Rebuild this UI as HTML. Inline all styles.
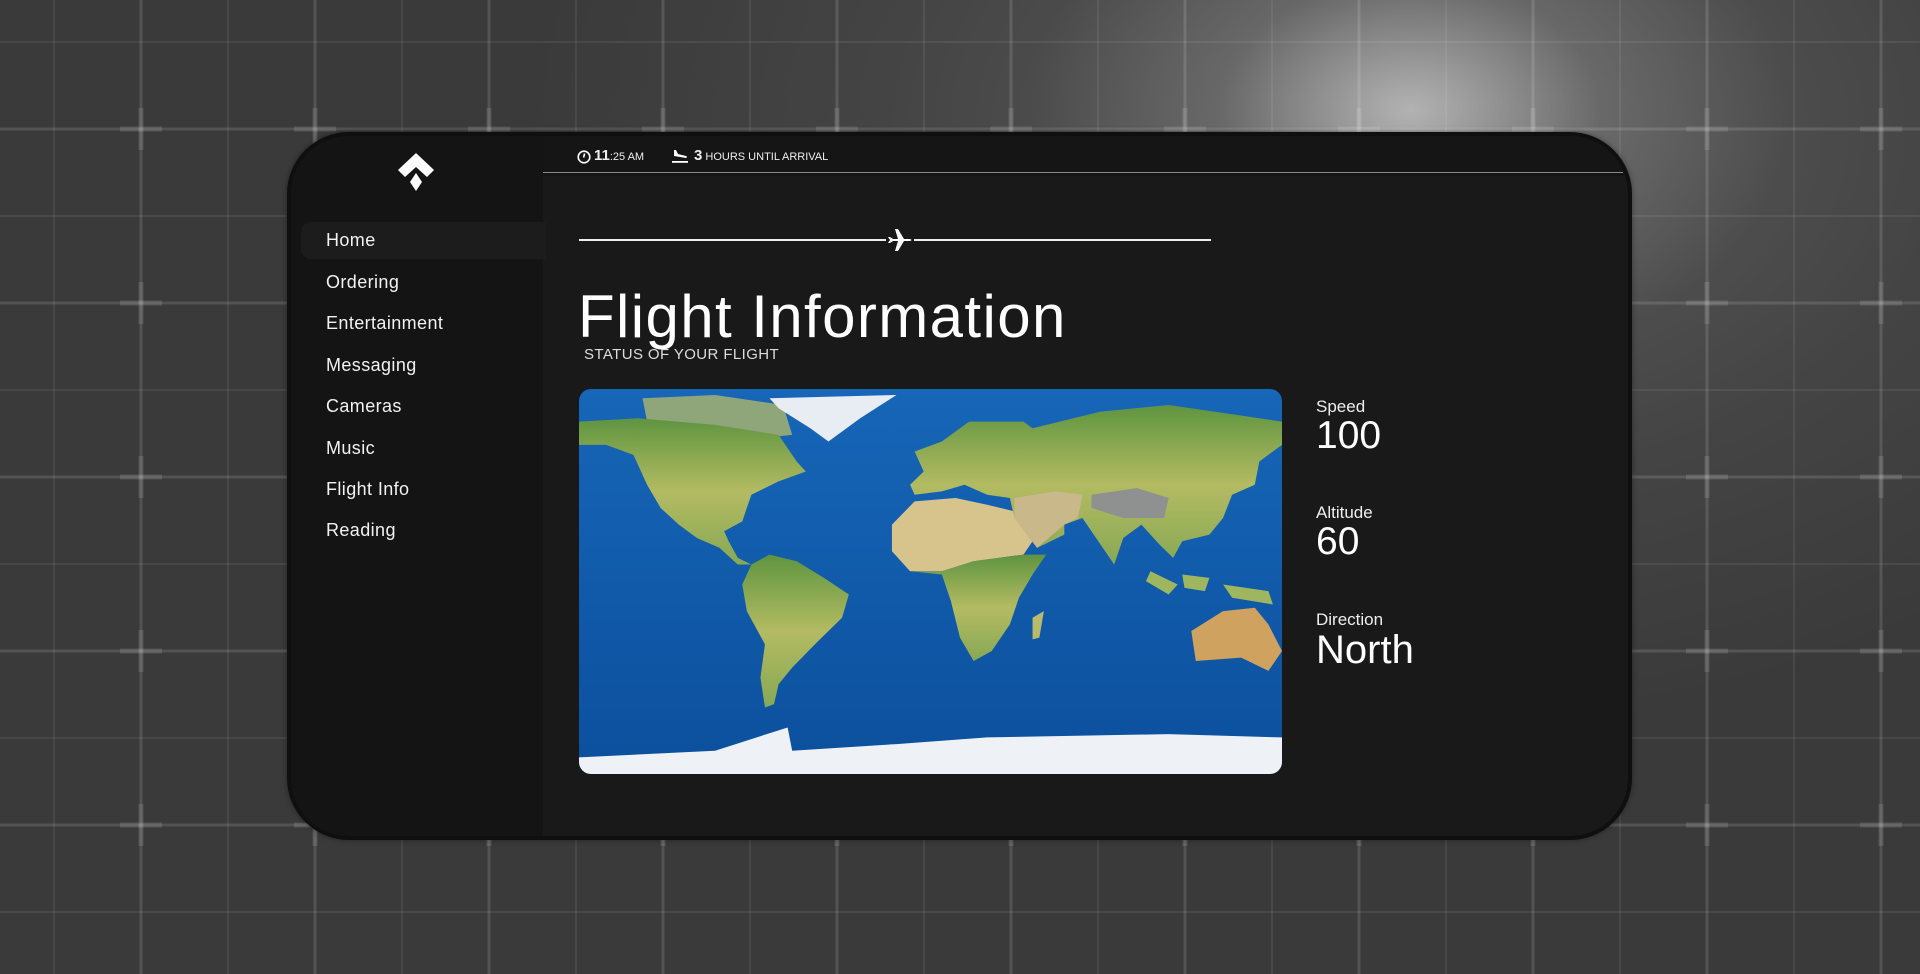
<!DOCTYPE html>
<html><head><meta charset="utf-8">
<style>
*{margin:0;padding:0;box-sizing:border-box}
html,body{width:1920px;height:974px;overflow:hidden}
body{position:relative;font-family:"Liberation Sans","DejaVu Sans",sans-serif;color:#fff;
background:
radial-gradient(ellipse 380px 260px at 1410px 110px, rgba(215,215,215,0.7), rgba(150,150,150,0.3) 50%, rgba(0,0,0,0) 100%),
radial-gradient(ellipse 900px 600px at 1420px 130px, #5e5e5e, #444 60%, #3a3a3a 100%);
}
.grid{position:absolute;inset:0}
.panel{position:absolute;left:287px;top:132px;width:1345px;height:708px;border-radius:62px;background:#191919;border:4px solid #0f0f0f;overflow:hidden;box-shadow:0 0 6px rgba(0,0,0,0.4)}
.side{position:absolute;left:0;top:0;width:252px;height:100%;background:#141414}
.head{position:absolute;left:252px;top:0;right:0;height:40px;background:#151515}
.hline{position:absolute;left:252px;top:36px;width:1080px;height:1px;background:#8a8a8a}
.nav{position:absolute;left:35px;font-size:18px;color:#f2f2f2;letter-spacing:0.4px}
.hl{position:absolute;left:10px;top:86px;width:245px;height:37px;background:#1c1c1c;border-radius:10px 0 0 10px}
.stat{position:absolute;left:1025px}
.lbl{font-size:17px;color:#eee}
.val{font-size:39px;line-height:38px}
</style></head><body>
<svg class="grid" width="1920" height="974">
<g stroke="rgba(255,255,255,0.07)" stroke-width="2">
<line x1="54" y1="0" x2="54" y2="974"/><line x1="228" y1="0" x2="228" y2="974"/><line x1="402" y1="0" x2="402" y2="974"/><line x1="576" y1="0" x2="576" y2="974"/><line x1="750" y1="0" x2="750" y2="974"/><line x1="924" y1="0" x2="924" y2="974"/><line x1="1098" y1="0" x2="1098" y2="974"/><line x1="1272" y1="0" x2="1272" y2="974"/><line x1="1446" y1="0" x2="1446" y2="974"/><line x1="1620" y1="0" x2="1620" y2="974"/><line x1="1794" y1="0" x2="1794" y2="974"/>
<line x1="0" y1="42" x2="1920" y2="42"/><line x1="0" y1="216" x2="1920" y2="216"/><line x1="0" y1="390" x2="1920" y2="390"/><line x1="0" y1="564" x2="1920" y2="564"/><line x1="0" y1="738" x2="1920" y2="738"/><line x1="0" y1="912" x2="1920" y2="912"/>
</g>
<g stroke="rgba(255,255,255,0.13)" stroke-width="3">
<line x1="141" y1="0" x2="141" y2="974"/><line x1="315" y1="0" x2="315" y2="974"/><line x1="489" y1="0" x2="489" y2="974"/><line x1="663" y1="0" x2="663" y2="974"/><line x1="837" y1="0" x2="837" y2="974"/><line x1="1011" y1="0" x2="1011" y2="974"/><line x1="1185" y1="0" x2="1185" y2="974"/><line x1="1359" y1="0" x2="1359" y2="974"/><line x1="1533" y1="0" x2="1533" y2="974"/><line x1="1707" y1="0" x2="1707" y2="974"/><line x1="1881" y1="0" x2="1881" y2="974"/>
<line x1="0" y1="129" x2="1920" y2="129"/><line x1="0" y1="303" x2="1920" y2="303"/><line x1="0" y1="477" x2="1920" y2="477"/><line x1="0" y1="651" x2="1920" y2="651"/><line x1="0" y1="825" x2="1920" y2="825"/>
</g>
<g id="crosses" stroke="rgba(255,255,255,0.12)" stroke-width="5">
</g>
</svg>
<script>
(function(){var g=document.getElementById('crosses'),s='';
[141,315,489,663,837,1011,1185,1359,1533,1707,1881].forEach(function(x){[129,303,477,651,825].forEach(function(y){
s+='<line x1="'+(x-21)+'" y1="'+y+'" x2="'+(x+21)+'" y2="'+y+'"/><line x1="'+x+'" y1="'+(y-21)+'" x2="'+x+'" y2="'+(y+21)+'"/>';});});
g.innerHTML=s;})();
</script>

<div class="panel">
 <div class="side"></div>
 <div class="head"></div>
 <div class="hline"></div>
 <svg style="position:absolute;left:107px;top:17px" width="36" height="38" viewBox="0 0 36 38">
  <polygon points="18,0 36,17 29,24 18,14 7,24 0,17" fill="#fff"/>
  <polygon points="18,20 24,29 18,38 12,29" fill="#fff"/>
 </svg>
 <div class="hl"></div>
 <div class="nav" style="top:94px">Home</div>
 <div class="nav" style="top:136px">Ordering</div>
 <div class="nav" style="top:177px">Entertainment</div>
 <div class="nav" style="top:219px">Messaging</div>
 <div class="nav" style="top:260px">Cameras</div>
 <div class="nav" style="top:302px">Music</div>
 <div class="nav" style="top:343px">Flight Info</div>
 <div class="nav" style="top:384px">Reading</div>

 <svg style="position:absolute;left:286px;top:14px" width="14" height="14" viewBox="0 0 14 14"><circle cx="7" cy="7" r="5.8" fill="none" stroke="#fff" stroke-width="1.6"/><path d="M7.6 3.5 L6.6 7.6" stroke="#fff" stroke-width="1.6"/></svg>
 <div style="position:absolute;left:303px;top:11px;font-size:11px;color:#eee;white-space:nowrap"><b style="font-size:15px">11</b>:25 AM</div>
 <svg style="position:absolute;left:380px;top:13px" width="18" height="15" viewBox="0 0 18 15"><path d="M3 1 L5 1 L7 5 L15 7 Q17 8 15 9 L3 7 Z" fill="#fff"/><rect x="1" y="12" width="16" height="1.8" fill="#fff"/></svg>
 <div style="position:absolute;left:403px;top:11px;font-size:11px;color:#eee;white-space:nowrap"><b style="font-size:15px">3</b> HOURS UNTIL ARRIVAL</div>

 <div style="position:absolute;left:288px;top:103px;width:307px;height:2px;background:#eee"></div>
 <div style="position:absolute;left:623px;top:103px;width:297px;height:2px;background:#eee"></div>
 <svg style="position:absolute;left:596px;top:91px" width="26" height="26" viewBox="0 0 26 26"><path d="M1 10 L3 10 L6 12 L11 12 L8 2 L11 2 L17 12 L23 12 Q26 13 23 14 L17 14 L11 24 L8 24 L11 14 L6 14 L3 16 L1 16 L3 13 Z" fill="#fff"/></svg>

 <div style="position:absolute;left:287px;top:146px;font-size:60px;letter-spacing:1.4px;white-space:nowrap">Flight Information</div>
 <div style="position:absolute;left:293px;top:210px;font-size:15px;color:#ddd;letter-spacing:0.4px">STATUS OF YOUR FLIGHT</div>

 <svg style="position:absolute;left:288px;top:253px;border-radius:12px" width="703" height="385" viewBox="0 12 1550 1158" preserveAspectRatio="none">
  <defs>
   <linearGradient id="oc" x1="0" y1="0" x2="0" y2="1"><stop offset="0" stop-color="#1766b8"/><stop offset="1" stop-color="#0b4f9c"/></linearGradient>
   <linearGradient id="ld" x1="0" y1="0" x2="0" y2="1"><stop offset="0" stop-color="#5f9440"/><stop offset=".5" stop-color="#b3bb62"/><stop offset="1" stop-color="#88a855"/></linearGradient>
  </defs>
  <rect x="0" y="0" width="1550" height="1200" fill="url(#oc)"/>
  <polygon fill="#8fa57a" points="140,40 300,30 450,60 470,150 400,160 300,130 150,110"/>
  <polygon fill="url(#ld)" points="0,110 130,100 300,120 440,150 480,230 500,260 440,290 380,330 360,410 320,440 330,470 350,520 380,540 350,540 310,490 260,460 220,420 180,370 150,300 120,210 60,180 0,180"/>
  <polygon fill="#e8ecf3" points="420,40 700,30 620,100 550,170 510,130 440,70"/>
  <polygon fill="url(#ld)" points="380,540 420,510 480,530 540,580 595,630 580,700 520,780 470,850 440,900 430,960 410,970 400,880 410,780 370,680 360,600"/>
  <polygon fill="#d6c48c" points="690,420 740,350 830,340 900,360 960,380 1000,470 980,510 870,530 800,560 730,560 690,500"/>
  <polygon fill="url(#ld)" points="730,560 800,560 870,530 980,510 1030,510 1000,570 970,640 950,720 910,800 870,830 840,760 820,650 800,570"/>
  <polygon fill="#b9bb6c" points="1000,700 1025,680 1015,760 1000,765"/>
  <polygon fill="url(#ld)" points="740,200 800,170 860,110 980,110 1000,130 1150,80 1300,60 1450,90 1550,110 1550,180 1500,230 1490,300 1440,330 1420,400 1390,450 1330,470 1310,520 1280,480 1240,420 1200,460 1180,540 1140,460 1110,400 1070,420 1070,450 1010,490 960,400 950,340 900,330 850,300 800,320 740,330 730,300 760,260"/>
  <polygon fill="#c9b98a" points="960,340 1050,320 1110,330 1100,400 1070,420 1010,490 960,400"/>
  <polygon fill="#8f9090" points="1130,330 1230,310 1300,340 1290,400 1200,400 1130,370"/>
  <polygon fill="#9fb660" points="1260,560 1320,600 1300,630 1250,590"/>
  <polygon fill="#9fb660" points="1330,570 1390,580 1380,620 1335,610"/>
  <polygon fill="#9fb660" points="1420,600 1520,620 1530,660 1440,640"/>
  <polygon fill="#d0a260" points="1350,740 1420,680 1490,670 1520,720 1550,800 1520,860 1460,820 1360,830"/>
  <polygon fill="#eef2f7" points="0,1120 300,1100 460,1030 470,1100 700,1080 900,1060 1300,1050 1550,1060 1550,1200 0,1200"/>
 </svg>

 <div class="stat" style="top:261px"><div class="lbl">Speed</div><div class="val">100</div></div>
 <div class="stat" style="top:367px"><div class="lbl">Altitude</div><div class="val">60</div></div>
 <div class="stat" style="top:474px"><div class="lbl">Direction</div><div class="val" style="font-size:40px;line-height:41px">North</div></div>
</div>
</body></html>
